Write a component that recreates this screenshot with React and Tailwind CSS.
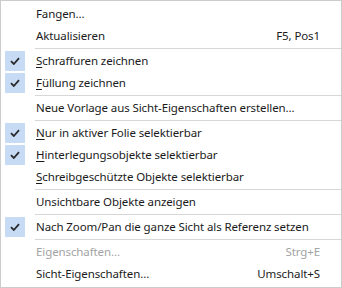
import React from "react";

const items = [
  { label: "Fangen...", shortcut: "" },
  { label: "Aktualisieren", shortcut: "F5, Pos1" },
  { sep: true },
  { label: "chraffuren zeichnen", mn: "S", checked: true },
  { label: "üllung zeichnen", mn: "F", checked: true },
  { sep: true },
  { label: "Neue Vorlage aus Sicht-Eigenschaften erstellen..." },
  { sep: true },
  { label: "ur in aktiver Folie selektierbar", mn: "N", checked: true },
  { label: "interlegungsobjekte selektierbar", mn: "H", checked: true },
  { label: "chreibgeschützte Objekte selektierbar", mn: "S" },
  { sep: true },
  { label: "Unsichtbare Objekte anzeigen" },
  { sep: true },
  { label: "Nach Zoom/Pan die ganze Sicht als Referenz setzen", checked: true },
  { sep: true },
  { label: "Eigenschaften...", shortcut: "Strg+E", disabled: true },
  { label: "Sicht-Eigenschaften...", shortcut: "Umschalt+S" },
];

function Check() {
  return (
    <svg width="10" height="8" viewBox="0 0 10 8">
      <path d="M1 4.2 L3.8 7 L9 1.2" fill="none" stroke="#2b2b2b" strokeWidth="1.8" />
    </svg>
  );
}

export default function App() {
  return (
    <div
      className="w-[342px] h-[288px] bg-white border border-[#cccccc] py-[2px] text-[11.5px] tracking-[-0.1px] text-[#1b1b1b]"
      style={{ fontFamily: '"Noto Sans", "Open Sans", sans-serif' }}
    >
      {items.map((it, i) =>
        it.sep ? (
          <div key={i} className="h-[3px] flex items-center pl-[34px]">
            <div className="h-px w-full bg-[#d7d7d7]" />
          </div>
        ) : (
          <div key={i} className="h-[22px] flex items-center">
            <div className="w-[34px] pl-[4px] flex items-center">
              {it.checked && (
                <div className="w-[20px] h-[20px] bg-[#c7dbf4] flex items-center justify-center">
                  <Check />
                </div>
              )}
            </div>
            <div className={`flex-1 flex items-center pl-[1px] pr-[21px] ${it.disabled ? "text-[#a3a3a3]" : ""}`}>
              <span className="flex-1 whitespace-nowrap">
                {it.mn && <span className="underline underline-offset-2">{it.mn}</span>}
                {it.label}
              </span>
              {it.shortcut && <span className="whitespace-nowrap">{it.shortcut}</span>}
            </div>
          </div>
        )
      )}
    </div>
  );
}
